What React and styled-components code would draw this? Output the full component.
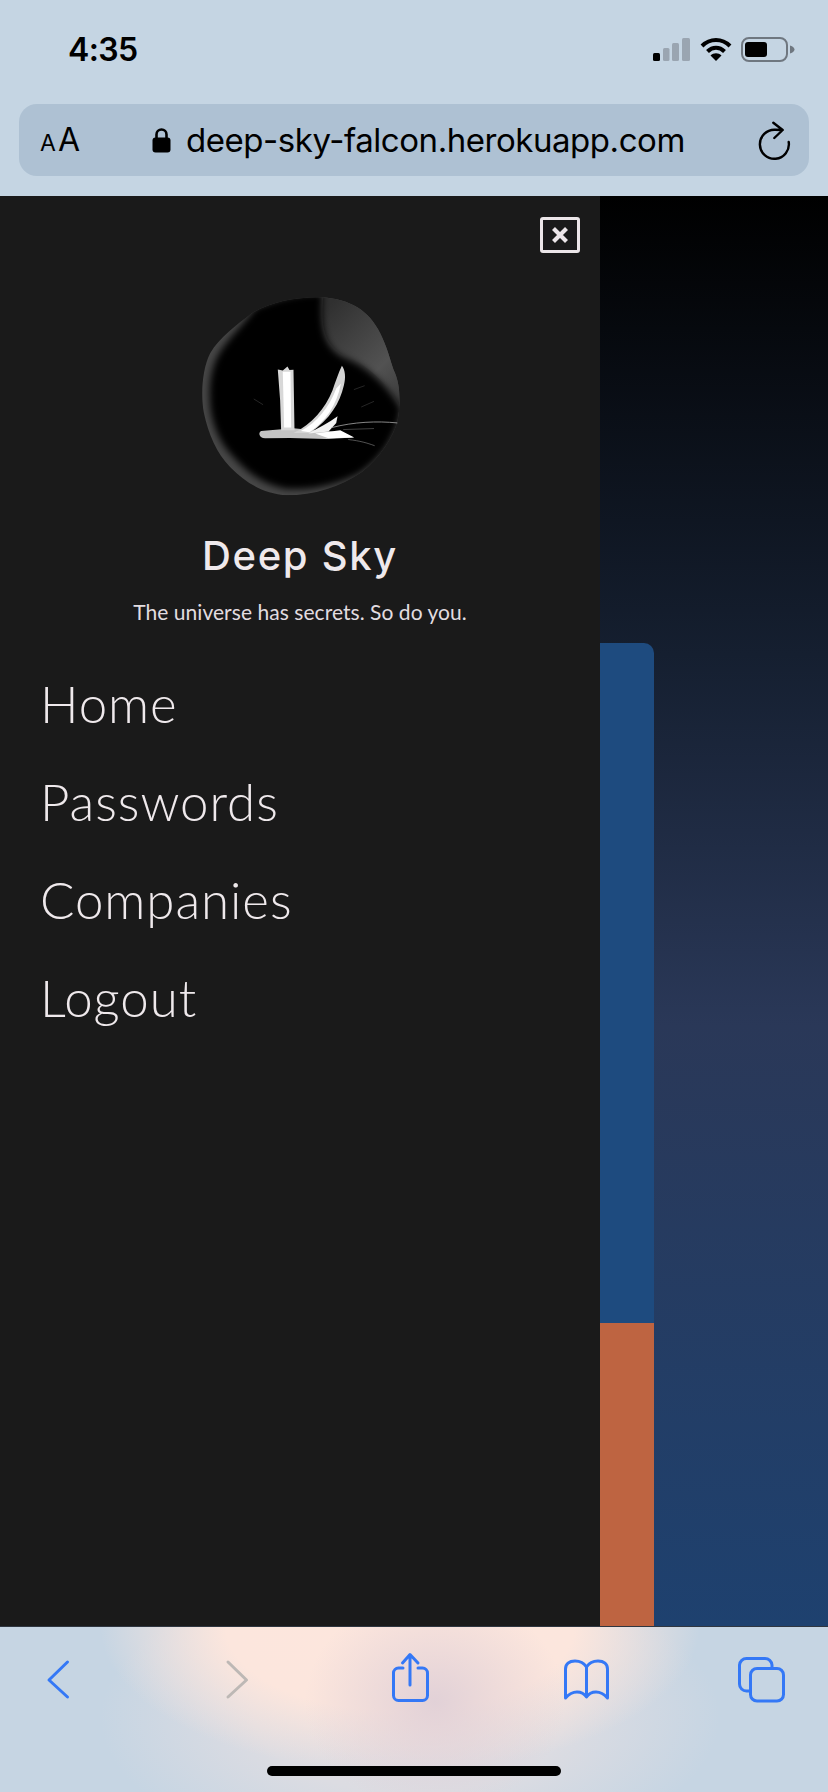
import styled, { createGlobalStyle } from "styled-components";

const GlobalStyle = createGlobalStyle`
  body {
    margin: 0;
    background: #c5d5e3;
  }
`;

const Phone = styled.div`
  width: 828px;
  height: 1792px;
  display: flex;
  flex-direction: column;
  overflow: hidden;
`;

const TopChrome = styled.header`
  height: 196px;
  flex: none;
  background: #c5d5e3;
`;

const StatusBar = styled.div`
  height: 104px;
  box-sizing: border-box;
  padding: 0 33px 5px 68px;
  display: flex;
  align-items: center;
`;

const Clock = styled.span`
  font-family: Inter, "Liberation Sans", sans-serif;
  font-size: 32px;
  font-weight: 600;
  letter-spacing: -0.6px;
  color: #000;
  margin-right: auto;
`;

const StatusIcon = styled.svg`
  display: block;
  margin-left: ${(p) => p.$gap || 0}px;
`;

const UrlBar = styled.div`
  height: 72px;
  margin: 0 19px 0 19px;
  padding: 0 20px 0 21px;
  border-radius: 18px;
  background: #aec1d3;
  display: flex;
  align-items: center;
`;

const TextSize = styled.div`
  width: 112px;
  font-family: Inter, "Liberation Sans", sans-serif;
  color: #000;
  line-height: 1;
`;

const SmallA = styled.span`
  font-size: 23px;
  margin-right: 2px;
`;

const BigA = styled.span`
  font-size: 32px;
`;

const Address = styled.span`
  margin-left: 15px;
  font-family: Inter, "Liberation Sans", sans-serif;
  font-size: 33px;
  letter-spacing: -0.45px;
  color: #000;
  white-space: nowrap;
`;

const Reload = styled.svg`
  display: block;
  margin-left: auto;
  overflow: visible;
`;

const Main = styled.main`
  flex: 1;
  min-height: 0;
  display: flex;
  background: linear-gradient(
    180deg,
    #000 0%,
    #151f30 32%,
    #2a3858 58%,
    #1e416f 100%
  );
`;

const Drawer = styled.nav`
  width: 600px;
  flex: none;
  background: #1a1a1a;
  display: flex;
  flex-direction: column;
`;

const CloseButton = styled.div`
  align-self: flex-end;
  width: 40px;
  height: 36px;
  box-sizing: border-box;
  margin: 21px 20px 0 0;
  border: 3px solid #ece6e9;
  border-radius: 3px;
  display: flex;
  align-items: center;
  justify-content: center;
`;

const Logo = styled.svg`
  display: block;
  align-self: center;
  margin: 42px 0 0 2px;
`;

const Title = styled.h1`
  margin: 35px 0 0;
  text-align: center;
  font-family: Inter, "Open Sans", sans-serif;
  font-size: 40px;
  line-height: 48px;
  font-weight: 500;
  letter-spacing: 1.7px;
  color: #efe9ec;
`;

const Tagline = styled.p`
  margin: 19px 0 0;
  text-align: center;
  font-family: Lato, "Open Sans", sans-serif;
  font-size: 21px;
  line-height: 26px;
  font-weight: 400;
  letter-spacing: 0.05px;
  color: #e2dde0;
`;

const NavList = styled.div`
  margin-top: 30px;
  padding-left: 40px;
  display: flex;
  flex-direction: column;
`;

const NavLink = styled.a`
  font-family: Lato, "Open Sans", sans-serif;
  font-size: 51px;
  line-height: 98px;
  font-weight: 300;
  letter-spacing: 0.95px;
  color: #efe9ec;
`;

const Backdrop = styled.div`
  flex: 1;
  padding-top: 447px;
  display: flex;
  flex-direction: column;
`;

const CardBlue = styled.div`
  width: 54px;
  height: 680px;
  flex: none;
  background: #1e4b7f;
  border-top-right-radius: 10px;
`;

const CardOrange = styled.div`
  width: 54px;
  flex: 1;
  background: #be6441;
`;

const BottomChrome = styled.footer`
  height: 166px;
  flex: none;
  box-sizing: border-box;
  border-top: 1px solid #2f3640;
  display: flex;
  flex-direction: column;
  background:
    radial-gradient(ellipse 130px 110px at 435px 75px, rgba(224, 208, 215, 0.95) 0%, rgba(224, 208, 215, 0) 100%),
    radial-gradient(ellipse 300px 145px at 400px 0px, #fde6dd 0%, #fce6dd 58%, rgba(252, 230, 221, 0) 100%),
    radial-gradient(ellipse 310px 150px at 410px 90px, #e0dde3 0%, #dcdce2 50%, rgba(220, 220, 226, 0) 100%),
    #c6d5e3;
`;

const Toolbar = styled.div`
  padding-top: 23px;
  display: grid;
  grid-template-columns: repeat(5, 116px);
  column-gap: 60px;
  justify-items: center;
`;

const ToolIcon = styled.svg`
  display: block;
  fill: none;
  stroke: ${(p) => (p.$disabled ? "#bdb8b5" : "#3478f6")};
  stroke-width: 3;
  stroke-linecap: round;
  stroke-linejoin: round;
`;

const HomeBar = styled.div`
  align-self: center;
  width: 294px;
  height: 10px;
  margin-top: auto;
  margin-bottom: 16px;
  border-radius: 5px;
  background: #000;
`;

const DeepSkyLogo = () => (
  <Logo width="202" height="202" viewBox="60 285 605 605">
    <defs>
      <filter id="soft" x="-20%" y="-20%" width="140%" height="140%">
        <feGaussianBlur stdDeviation="11" />
      </filter>
      <filter id="brush" x="-20%" y="-20%" width="140%" height="140%">
        <feGaussianBlur stdDeviation="1.8" />
      </filter>
      <linearGradient id="curl" x1="0.2" y1="0" x2="1" y2="1">
        <stop offset="0" stopColor="#303030" />
        <stop offset="0.6" stopColor="#525252" />
        <stop offset="1" stopColor="#333333" />
      </linearGradient>
      <clipPath id="blobClip">
        <path d="M215 340C270 305 350 290 425 292C510 298 565 330 600 400C620 440 630 480 640 510C660 550 662 610 652 660C640 710 600 770 545 815C480 860 400 885 320 885C250 880 200 850 150 800C110 760 85 700 72 640C62 590 65 510 90 460C120 410 170 375 215 340Z" />
      </clipPath>
    </defs>
    <g clipPath="url(#blobClip)">
      <rect x="60" y="285" width="605" height="605" fill="#464646" />
      <path d="M430 280C420 380 430 430 490 465C560 490 630 560 662 625L700 300Z" fill="url(#curl)" />
      <path
        filter="url(#soft)"
        d="M225 325C290 295 360 280 428 280C420 380 430 440 490 472C560 498 625 560 662 625C650 710 600 780 535 820C460 858 390 868 320 866C250 855 200 815 160 770C120 730 100 680 92 630C85 570 90 510 115 465C140 420 180 385 225 325Z"
        fill="#000"
      />
    </g>
    <g filter="url(#brush)">
      <path d="M243 692L340 684L400 690L470 695L520 712L440 716L330 713L255 714C236 713 234 696 243 692Z" fill="#c4c4c4" />
      <path d="M293 508L308 511L322 499L328 510L340 509L343 690L303 690L300 600Z" fill="#d8d8d8" />
      <path d="M308 515L331 515L333 682L312 682Z" fill="#ffffff" />
      <path d="M340 698C395 672 435 625 457 570C466 545 474 520 485 497C495 510 497 532 491 555C478 610 450 655 390 698Z" fill="#d4d4d4" />
      <path d="M362 692C410 668 448 620 468 565L482 550C470 615 435 665 388 696Z" fill="#ffffff" />
      <path d="M385 700C415 682 445 668 472 648L468 668L445 694Z" fill="#f2f2f2" />
      <path d="M405 700L480 690L522 712L445 714Z" fill="#ffffff" />
    </g>
    <g fill="none" strokeLinecap="round">
      <path d="M222 597L248 613" stroke="#3a3a3a" strokeWidth="2" />
      <path d="M522 568L552 557" stroke="#3a3a3a" strokeWidth="2" />
      <path d="M544 620L580 604" stroke="#3a3a3a" strokeWidth="2" />
      <path d="M455 682C520 665 590 662 650 668" stroke="#a8a8a8" strokeWidth="2.4" />
      <path d="M490 688L580 685" stroke="#5e5e5e" strokeWidth="2" />
      <path d="M505 718C540 722 560 728 582 736" stroke="#7a7a7a" strokeWidth="2" />
    </g>
  </Logo>
);

const App = () => {
  return (
    <Phone>
      <GlobalStyle />
      <TopChrome>
        <StatusBar>
          <Clock>4:35</Clock>
          <StatusIcon width="37" height="23" viewBox="0 0 37 23">
            <rect x="0" y="15" width="7" height="8" rx="1.5" fill="#000" />
            <rect x="10" y="10" width="6.5" height="13" rx="1.5" fill="#9aa5b1" />
            <rect x="19" y="5" width="7" height="18" rx="1.5" fill="#9aa5b1" />
            <rect x="29" y="0" width="8" height="23" rx="1.5" fill="#9aa5b1" />
          </StatusIcon>
          <StatusIcon $gap={10} width="32" height="23" viewBox="0 0 32 23">
            <path d="M2 8C10 0 22 0 30 8" fill="none" stroke="#000" strokeWidth="4" />
            <path d="M7.5 13.5C12.5 8.5 19.5 8.5 24.5 13.5" fill="none" stroke="#000" strokeWidth="4" />
            <path d="M16 23L10.5 17.5C13.5 14.5 18.5 14.5 21.5 17.5Z" fill="#000" />
          </StatusIcon>
          <StatusIcon $gap={9} width="54" height="25" viewBox="0 0 54 25">
            <rect x="1" y="1" width="45" height="23" rx="7" fill="none" stroke="#6f7780" strokeWidth="2" />
            <rect x="4" y="5" width="22" height="15" rx="3" fill="#000" />
            <path d="M49 8.5C52 9.5 53.5 11 53.5 12.5C53.5 14 52 15.5 49 16.5Z" fill="#6f7780" />
          </StatusIcon>
        </StatusBar>
        <UrlBar>
          <TextSize>
            <SmallA>A</SmallA>
            <BigA>A</BigA>
          </TextSize>
          <svg width="19" height="26" viewBox="0 0 19 26">
            <path d="M4.5 12V7.5a5 5 0 0 1 10 0V12" fill="none" stroke="#000" strokeWidth="2.6" />
            <rect x="0.5" y="10.5" width="18" height="15" rx="3" fill="#000" />
          </svg>
          <Address>deep-sky-falcon.herokuapp.com</Address>
          <Reload width="30" height="36" viewBox="0 0 30 36">
            <path
              d="M29.7 20A14.5 14.5 0 1 1 16 7.8L23.5 8M14.3 0.7L23.7 8L15.3 16"
              fill="none"
              stroke="#000"
              strokeWidth="2.4"
              strokeLinecap="round"
              strokeLinejoin="round"
            />
          </Reload>
        </UrlBar>
      </TopChrome>

      <Main>
        <Drawer>
          <CloseButton>
            <svg width="18" height="18" viewBox="0 0 18 18">
              <path d="M2.5 2.5L15.5 15.5M15.5 2.5L2.5 15.5" stroke="#ece6e9" strokeWidth="4.2" />
            </svg>
          </CloseButton>
          <DeepSkyLogo />
          <Title>Deep Sky</Title>
          <Tagline>The universe has secrets. So do you.</Tagline>
          <NavList>
            <NavLink>Home</NavLink>
            <NavLink>Passwords</NavLink>
            <NavLink>Companies</NavLink>
            <NavLink>Logout</NavLink>
          </NavList>
        </Drawer>
        <Backdrop>
          <CardBlue />
          <CardOrange />
        </Backdrop>
      </Main>

      <BottomChrome>
        <Toolbar>
          <ToolIcon width="60" height="60" viewBox="0 0 60 60">
            <path d="M39.5 12L21 30L39.5 47" />
          </ToolIcon>
          <ToolIcon $disabled width="60" height="60" viewBox="0 0 60 60">
            <path d="M24 12L42.5 30L24 47" />
          </ToolIcon>
          <ToolIcon width="60" height="60" viewBox="0 0 60 60">
            <path d="M23 18H18.5A5 5 0 0 0 13.5 23V45.5A5 5 0 0 0 18.5 50.5H42.5A5 5 0 0 0 47.5 45.5V23A5 5 0 0 0 42.5 18H38" />
            <path d="M30 35V5M22.5 13L30 4.5L38 13" />
          </ToolIcon>
          <ToolIcon width="60" height="60" viewBox="0 0 60 60">
            <path d="M30.5 17V46" />
            <path d="M30.5 17C28 13 24 11 19 11C13 11 9.5 14 9.5 19V48C13 44 17 42 21 42C25 42 28.5 44 30.5 47C32.5 44 36 42 40 42C44 42 48 44 51.5 48V19C51.5 14 48 11 42 11C37 11 33 13 30.5 17Z" />
          </ToolIcon>
          <ToolIcon width="60" height="60" viewBox="0 0 60 60">
            <rect x="18.5" y="18.5" width="33" height="32.5" rx="6.5" />
            <path d="M40 18V15A7 7 0 0 0 33 8.5H14.5A7 7 0 0 0 7.5 15V34A7 7 0 0 0 14.5 41H18" />
          </ToolIcon>
        </Toolbar>
        <HomeBar />
      </BottomChrome>
    </Phone>
  );
};

export default App;
